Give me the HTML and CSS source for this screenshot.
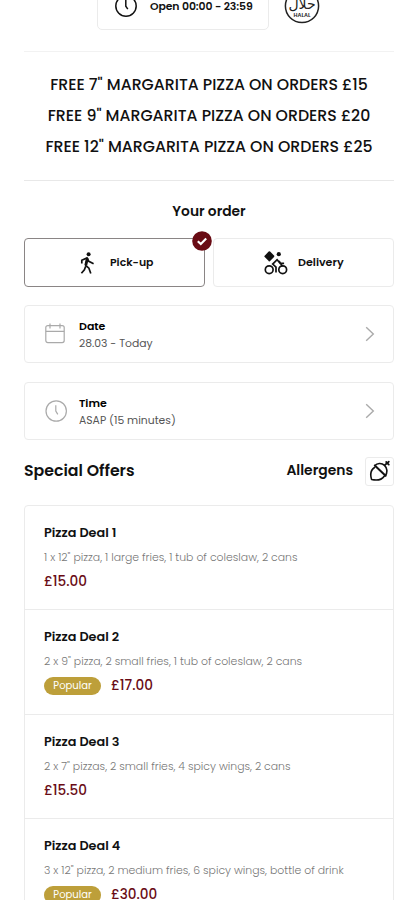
FILE: index.html
```html
<!DOCTYPE html>
<html lang="en">
<head>
<meta charset="utf-8">
<meta name="viewport" content="width=device-width, initial-scale=1">
<title>Order</title>
<link rel="stylesheet" href="styles.css">
</head>
<body>
<main class="page">
  <header class="info">
    <div class="hours">
      <svg class="hours-icon" width="24" height="24" viewBox="0 0 24 24" fill="none" stroke="#111" stroke-width="1.5"><circle cx="12" cy="12" r="10.2"/><path d="M11.8 5.5v6.8l2 2.8"/></svg>
      <span class="hours-text">Open 00:00 - 23:59</span>
    </div>
    <svg class="halal" width="36" height="36" viewBox="0 0 36 36"><circle cx="18" cy="18" r="16.6" fill="none" stroke="#222" stroke-width="1.5"/><text x="18" y="21" text-anchor="middle" class="halal-ar">حلال</text><text x="18" y="28.5" text-anchor="middle" class="halal-en">HALAL</text></svg>
  </header>

  <section class="promo">
    <p>FREE 7" MARGARITA PIZZA ON ORDERS £15</p>
    <p>FREE 9" MARGARITA PIZZA ON ORDERS £20</p>
    <p>FREE 12" MARGARITA PIZZA ON ORDERS £25</p>
  </section>

  <h2 class="order-title">Your order</h2>
  <div class="modes">
    <button class="mode selected">
      <svg class="mode-icon" width="24" height="24" viewBox="0 0 24 24" fill="none" stroke="#111" stroke-width="1.7"><circle cx="12.6" cy="3.2" r="2" fill="#111" stroke="none"/><path d="M11.500 7L9.700 14.500l3.200 2.700 1.900 5.300M9.600 15.500l-1.200 3.300-3 3.500M5.800 12.600V9.200L11 6.900l1.800 3.400 4.800 2.400"/><path d="M11.300 7.300l-1.500 7" stroke-width="2.800"/></svg>
      <span class="pickup-text">Pick-up</span>
      <svg class="check" width="20" height="20" viewBox="0 0 20 20"><circle cx="10" cy="10" r="9.8" fill="#690b14"/><path d="M5.8 10.2l3 2.9 5.4-5.6" fill="none" stroke="#fff" stroke-width="2.1"/></svg>
    </button>
    <button class="mode">
      <svg class="bike" width="24" height="24" viewBox="0 0 24 24" fill="none" stroke="#111" stroke-width="1.7"><path d="M5.400 1.200l3.900 4-3.900 4.200L1.400 5.400z" fill="#111" stroke-linejoin="round" stroke-width="2"/><circle cx="14.800" cy="3.200" r="2.100" fill="#111" stroke="none"/><circle cx="5.200" cy="18.700" r="3.900"/><circle cx="18.700" cy="18.700" r="3.900"/><path d="M12 21.500v-5.300l-3.300-3.100 4.400-4.400 3.100 3.600h3.900M15 10l3.500 5.500"/></svg>
      <span class="delivery-text">Delivery</span>
    </button>
  </div>

  <div class="picker date-picker">
    <svg class="picker-icon" width="24" height="24" viewBox="0 0 24 24" fill="none" stroke="#aaa" stroke-width="1.2"><rect x="1.8" y="3.6" width="18.4" height="17" rx="2"/><path d="M1.8 9.3h18.4M6 1.6v5M16 1.6v5"/></svg>
    <div class="picker-body"><div class="picker-label">Date</div><div class="picker-value">28.03 - Today</div></div>
    <svg class="chevron" width="10" height="16" viewBox="0 0 10 16" fill="none" stroke="#aaa" stroke-width="1.4"><path d="M1.2 1.2L8.3 8l-7.1 6.8"/></svg>
  </div>
  <div class="picker">
    <svg class="picker-icon" width="24" height="24" viewBox="0 0 24 24" fill="none" stroke="#aaa" stroke-width="1.2"><circle cx="12.2" cy="12" r="10.2"/><path d="M11.8 6.2v5.9l2 3.3"/></svg>
    <div class="picker-body"><div class="picker-label">Time</div><div class="picker-value">ASAP (15 minutes)</div></div>
    <svg class="chevron" width="10" height="16" viewBox="0 0 10 16" fill="none" stroke="#aaa" stroke-width="1.4"><path d="M1.2 1.2L8.3 8l-7.1 6.8"/></svg>
  </div>

  <div class="section-head">
    <h2 class="section-title">Special Offers</h2>
    <span class="allergens">Allergens</span>
    <span class="allergen-box"><svg width="22" height="22" viewBox="0 0 22 22" fill="none" stroke="#111" stroke-width="1.6" stroke-linecap="round" stroke-linejoin="round"><path d="M6 5.500C8 3.200 12.500 2.600 15.500 5.300c2.700 2.500 3.200 6.800 1 10.200M5.500 7.500C1.800 10 1 14.500 2.600 19.500c5.300 1.100 10 .6 12.600-3.300"/><path d="M5.800 5.500l10.800 10.300" stroke-width="2"/><path d="M15.800 5.200l2.400-2.200M17.200 2l2.600 2.600M18.600 3l1.200-1.400" stroke-width="1.800"/></svg></span>
  </div>

  <section class="deals">
    <article class="deal">
      <h3 class="deal-name">Pizza Deal 1</h3>
      <p class="deal-text">1 x 12" pizza, 1 large fries, 1 tub of coleslaw, 2 cans</p>
      <div class="deal-foot"><span class="price">£15.00</span></div>
    </article>
    <article class="deal">
      <h3 class="deal-name">Pizza Deal 2</h3>
      <p class="deal-text">2 x 9" pizza, 2 small fries, 1 tub of coleslaw, 2 cans</p>
      <div class="deal-foot"><span class="badge">Popular</span><span class="price">£17.00</span></div>
    </article>
    <article class="deal">
      <h3 class="deal-name">Pizza Deal 3</h3>
      <p class="deal-text">2 x 7" pizzas, 2 small fries, 4 spicy wings, 2 cans</p>
      <div class="deal-foot"><span class="price">£15.50</span></div>
    </article>
    <article class="deal">
      <h3 class="deal-name">Pizza Deal 4</h3>
      <p class="deal-text">3 x 12" pizza, 2 medium fries, 6 spicy wings, bottle of drink</p>
      <div class="deal-foot"><span class="badge">Popular</span><span class="price">£30.00</span></div>
    </article>
  </section>
</main>
</body>
</html>
```
FILE: styles.css
```css
* { box-sizing: border-box; }
html, body { margin: 0; height: 900px; overflow: hidden; background: #fff; }
body { font-family: Poppins, Inter, sans-serif; color: #111; }
h2, h3, p { margin: 0; }
svg { flex: none; display: block; }
span, p, h2, h3, .picker-label, .picker-value { white-space: nowrap; }

.page { width: 370px; margin-left: 24px; height: 900px; overflow: hidden; }

.info { display: flex; height: 52px; padding-left: 73px; border-bottom: 1px solid #f2f2f2; }
.hours { display: flex; align-items: center; width: 172px; height: 50px; margin-top: -20px; padding: 2px 0 0 16px; border: 1px solid #ebebeb; border-radius: 5px; }
.hours-text { margin-left: 12px; padding-top: 2px; font-size: 10.9px; font-weight: 600; letter-spacing: -0.1px; }
.halal { margin: -12px 0 0 15px; }
.halal-ar { font: 400 14px "DejaVu Sans", sans-serif; fill: #222; }
.halal-en { font: 600 5.5px Poppins, Inter, sans-serif; fill: #222; }

.promo { height: 129px; padding-top: 17px; border-bottom: 1px solid #e8e8e8; text-align: center; font-size: 15.75px; line-height: 31px; font-weight: 500; }

.order-title { height: 57px; padding-top: 21px; text-align: center; font-size: 13.8px; line-height: 20px; font-weight: 600; }
.modes { display: grid; grid-template-columns: 181px 181px; gap: 8px; }
.mode { position: relative; display: flex; align-items: center; height: 49px; padding: 0 0 0 50px; border: 1px solid #ebebeb; border-radius: 4px; background: #fff; font: 600 11.1px Poppins, Inter, sans-serif; color: #111; }
.selected { padding-left: 51px; border-color: #8a8585; font-size: 10.9px; }
.check { position: absolute; top: -8px; right: -8px; }
.pickup-text, .delivery-text { margin-left: 10px; }

.picker { display: flex; align-items: center; height: 58px; margin-top: 19px; padding: 0 18px 0 19px; border: 1px solid #ebebeb; border-radius: 4px; }
.date-picker { margin-top: 18px; }
.picker-body { flex: 1; margin-left: 11px; padding-top: 1px; line-height: 17px; }
.picker-label { font-size: 11px; font-weight: 600; color: #000; }
.picker-value { font-size: 10.8px; color: #555; }

.section-head { display: flex; align-items: center; height: 28px; margin: 17px 0 20px; }
.section-title { flex: 1; font-size: 15.75px; line-height: 24px; font-weight: 600; }
.allergens { padding-bottom: 2px; font-size: 13.9px; font-weight: 600; }
.allergen-box { display: flex; align-items: center; justify-content: center; width: 29px; height: 29px; margin-left: 12px; border: 1px solid #ebebeb; border-radius: 3px; }

.deals { border: 1px solid #ebebeb; border-radius: 4px 4px 0 0; }
.deal { height: 104.4px; padding: 17px 19px 0; border-bottom: 1px solid #ebebeb; }
.deal-name { font-size: 12.8px; line-height: 20px; font-weight: 600; }
.deal-text { margin-top: 6px; font-size: 10.88px; line-height: 18px; font-weight: 300; color: #777; }
.deal-foot { display: flex; align-items: center; height: 20px; margin-top: 5px; }
.badge { width: 57px; height: 18px; margin-right: 10px; border-radius: 9px; background: #bd9f3a; color: #fff; font-size: 10px; line-height: 18px; text-align: center; }
.price { font-size: 13.6px; font-weight: 500; color: #690b14; }
```
